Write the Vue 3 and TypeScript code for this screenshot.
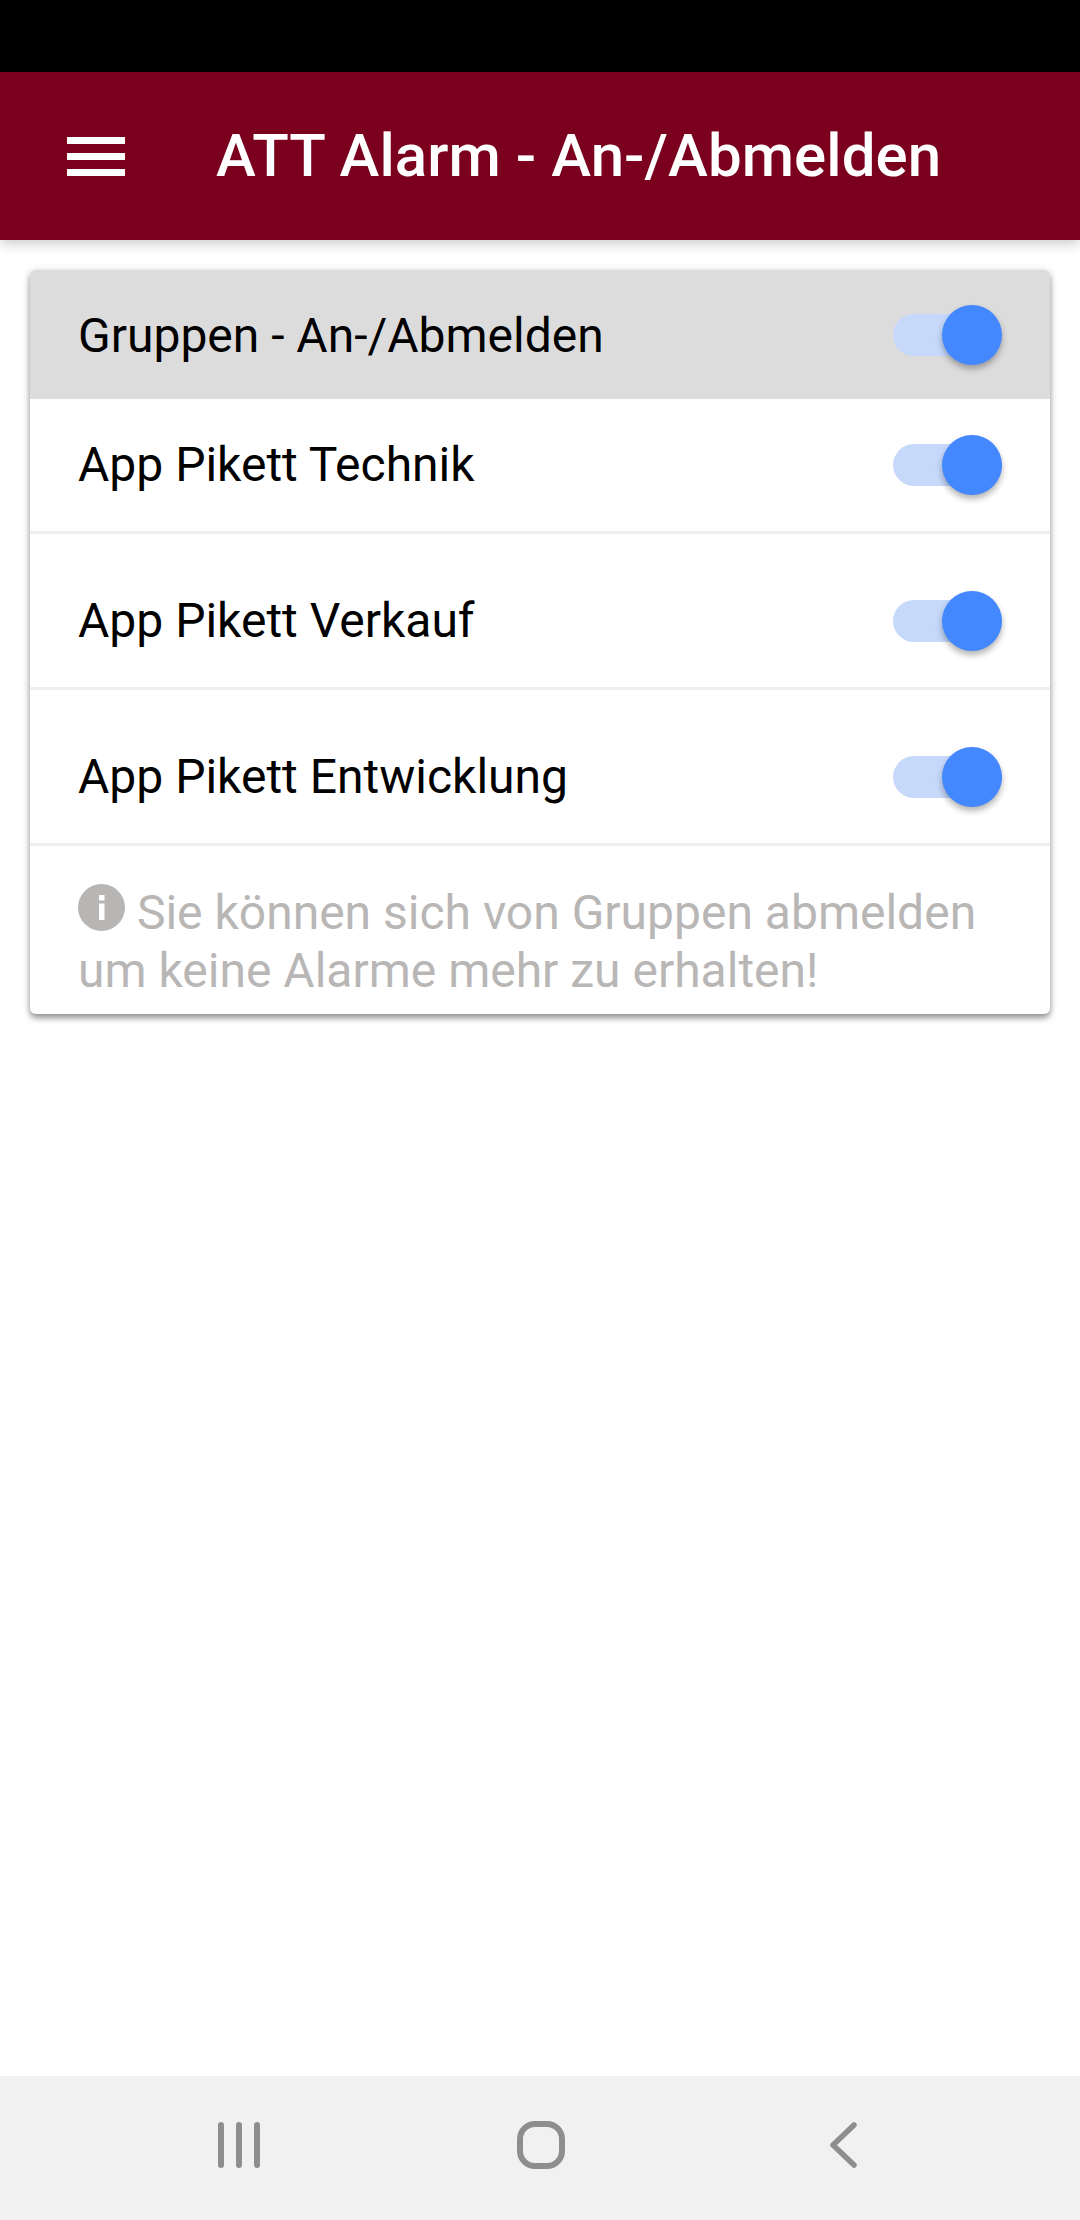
<script setup lang="ts">
interface Row { label: string; first?: boolean }
const rows: Row[] = [
  { label: 'App Pikett Technik', first: true },
  { label: 'App Pikett Verkauf' },
  { label: 'App Pikett Entwicklung' },
]
</script>

<template>
  <div class="screen">
    <div class="status"></div>
    <header class="bar">
      <svg class="menu" width="58" height="39" viewBox="0 0 58 39" aria-hidden="true">
        <rect x="0" y="0" width="58" height="7" fill="#fff" />
        <rect x="0" y="16" width="58" height="7" fill="#fff" />
        <rect x="0" y="32" width="58" height="7" fill="#fff" />
      </svg>
      <h1 class="title">ATT Alarm - An-/Abmelden</h1>
    </header>

    <main class="content">
      <section class="card">
        <div class="head">
          <span class="label">Gruppen - An-/Abmelden</span>
          <span class="toggle"><span class="thumb"></span></span>
        </div>
        <div v-for="r in rows" :key="r.label" class="row" :class="{ first: r.first }">
          <span class="label">{{ r.label }}</span>
          <span class="toggle"><span class="thumb"></span></span>
        </div>
        <p class="info">
          <svg class="info-icon" width="47" height="47" viewBox="0 0 47 47" aria-hidden="true">
            <circle cx="23.5" cy="23.5" r="23.5" fill="#b8b5b5" />
            <rect x="21" y="11" width="5.5" height="5.5" fill="#fff" />
            <rect x="21" y="19.5" width="5.5" height="16.5" fill="#fff" />
          </svg>
          Sie können sich von Gruppen abmelden um keine Alarme mehr zu erhalten!
        </p>
      </section>
    </main>

    <nav class="nav">
      <div class="nav-item">
        <svg width="60" height="60" viewBox="0 0 60 60" aria-hidden="true">
          <g stroke="#8e8e8e" stroke-width="6" stroke-linecap="round">
            <line x1="12" y1="10" x2="12" y2="50" />
            <line x1="30" y1="10" x2="30" y2="50" />
            <line x1="48" y1="10" x2="48" y2="50" />
          </g>
        </svg>
      </div>
      <div class="nav-item">
        <svg width="60" height="60" viewBox="0 0 60 60" aria-hidden="true">
          <rect x="9" y="9" width="42" height="42" rx="15" fill="none" stroke="#8e8e8e" stroke-width="6" />
        </svg>
      </div>
      <div class="nav-item">
        <svg width="60" height="60" viewBox="0 0 60 60" aria-hidden="true">
          <path d="M41 10 L20 30 L41 50" fill="none" stroke="#8e8e8e" stroke-width="5.5" stroke-linecap="round" stroke-linejoin="round" />
        </svg>
      </div>
    </nav>
  </div>
</template>

<style>
html, body { margin: 0; background: #fff; }
</style>

<style scoped>
.screen {
  width: 1080px;
  height: 2220px;
  display: flex;
  flex-direction: column;
  overflow: hidden;
  font-family: Roboto, "Liberation Sans", sans-serif;
  background: #fff;
}
.status { height: 72px; background: #000; flex: none; }
.bar {
  flex: none;
  height: 168px;
  background: #7a001e;
  display: flex;
  align-items: center;
  padding-left: 67px;
  box-shadow: 0 4px 12px rgba(0, 0, 0, 0.2);
  position: relative;
}
.menu { flex: none; }
.title {
  margin: 0 0 0 91px;
  color: #fff;
  font-size: 60px;
  font-weight: 500;
  letter-spacing: 0.08px;
  line-height: 1;
  white-space: nowrap;
}
.content { flex: 1; padding: 30px 30px 0; }
.card {
  border-radius: 6px;
  overflow: hidden;
  background: #fff;
  box-shadow: 0 4px 6px rgba(0, 0, 0, 0.4), 0 0 10px rgba(0, 0, 0, 0.1);
}
.head, .row {
  display: flex;
  align-items: center;
  justify-content: space-between;
  padding-left: 48px;
  padding-right: 48px;
}
.head { height: 129px; background: #dcdcdc; }
.head .label { position: relative; top: 1px; }
.row {
  box-sizing: border-box;
  height: 156px;
  padding-top: 20px;
  border-bottom: 3px solid #eeeeee;
}
.row.first { height: 135px; padding-top: 0; }
.label { font-size: 48px; color: #000; line-height: 1; white-space: nowrap; }
.toggle {
  position: relative;
  display: block;
  width: 109px;
  height: 42px;
  border-radius: 21px;
  background: #c6d9fb;
  flex: none;
}
.thumb {
  position: absolute;
  right: 0;
  top: -9px;
  width: 60px;
  height: 60px;
  border-radius: 50%;
  background: #4488ff;
  box-shadow: 0 4px 6px rgba(0, 0, 0, 0.3);
}
.info {
  margin: 0;
  padding: 38px 40px 14px 48px;
  font-size: 48px;
  line-height: 58px;
  color: #b9b6b6;
}
.info-icon { vertical-align: -2px; }
.nav {
  flex: none;
  box-sizing: border-box;
  height: 144px;
  background: #f1f1f1;
  display: flex;
  justify-content: center;
  align-items: center;
  padding-left: 2px;
  padding-bottom: 6px;
}
.nav-item {
  width: 302px;
  display: flex;
  justify-content: center;
  align-items: center;
}
.nav-item svg { display: block; }
</style>
